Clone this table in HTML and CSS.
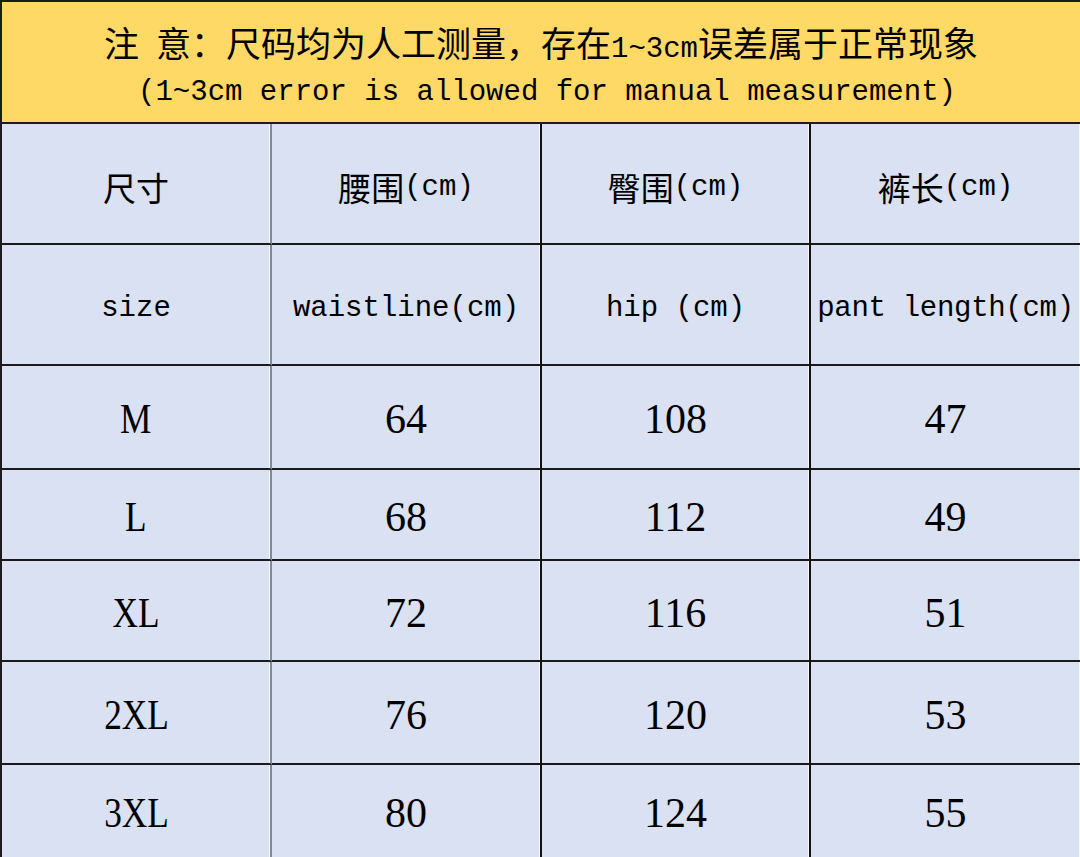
FILE: index.html
```html
<!DOCTYPE html>
<html lang="zh-CN">
<head>
<meta charset="utf-8">
<title>尺码表</title>
<link rel="stylesheet" href="styles.css">
</head>
<body>
<div class="sheet">
  <div class="note">
    <div class="note-line">注<span class="sp"> </span>意：尺码均为人工测量，存在<span class="lat">1~3cm</span>误差属于正常现象</div>
    <div class="note-line note-en"><span class="lat">(1~3cm error is allowed for manual measurement)</span></div>
  </div>

  <div class="cell c1 cjk">尺寸</div>
  <div class="cell c2 cjk">腰围<span class="lat">(cm)</span></div>
  <div class="cell c3 cjk">臀围<span class="lat">(cm)</span></div>
  <div class="cell c4 cjk">裤长<span class="lat">(cm)</span></div>

  <div class="cell c1 en">size</div>
  <div class="cell c2 en">waistline(cm)</div>
  <div class="cell c3 en">hip (cm)</div>
  <div class="cell c4 en">pant length(cm)</div>

  <div class="cell c1 num"><span class="narrow">M</span></div>
  <div class="cell c2 num">64</div>
  <div class="cell c3 num">108</div>
  <div class="cell c4 num">47</div>

  <div class="cell c1 num"><span class="narrow">L</span></div>
  <div class="cell c2 num">68</div>
  <div class="cell c3 num">112</div>
  <div class="cell c4 num">49</div>

  <div class="cell c1 num"><span class="narrow">XL</span></div>
  <div class="cell c2 num">72</div>
  <div class="cell c3 num">116</div>
  <div class="cell c4 num">51</div>

  <div class="cell c1 num"><span class="narrow">2XL</span></div>
  <div class="cell c2 num">76</div>
  <div class="cell c3 num">120</div>
  <div class="cell c4 num">53</div>

  <div class="cell c1 num"><span class="narrow">3XL</span></div>
  <div class="cell c2 num">80</div>
  <div class="cell c3 num">124</div>
  <div class="cell c4 num">55</div>
</div>
</body>
</html>
```

FILE: styles.css
```css
html, body {
  margin: 0;
  padding: 0;
  background: #ffffff;
}

body {
  width: 1080px;
  height: 857px;
  overflow: hidden;
  color: #000;
  font-family: "Noto Sans CJK SC", "Liberation Serif", serif;
}

.sheet {
  box-sizing: border-box;
  width: 1080px;
  height: 857px;
  display: grid;
  grid-template-columns: 270px 270px 269px 271px;
  grid-template-rows: 122px 121px 121px 104px 91px 101px 103px 94px;
  border-top: 2px solid #1c1c1c;
  border-left: 2px solid #1c1c1c;
}

.note {
  grid-column: 1 / 5;
  box-sizing: border-box;
  background: #ffd966;
  border-right: 2px solid #1c1c1c;
  border-bottom: 2px solid #1c1c1c;
  display: flex;
  flex-direction: column;
  align-items: center;
  justify-content: center;
  padding-top: 2px;
}

.note-line {
  font-family: "Noto Sans CJK SC", sans-serif;
  font-size: 35px;
  line-height: 44px;
  height: 44px;
  white-space: nowrap;
}

.note-en {
  padding-left: 12px;
  margin-top: -1px;
}

.sp {
  display: inline-block;
  width: 17px;
}

.lat {
  font-family: "Liberation Mono", "DejaVu Sans Mono", monospace;
  font-size: 29px;
}

.cell {
  box-sizing: border-box;
  background: #d9e1f2;
  border-right: 2px solid #111;
  border-bottom: 2px solid #1a1a1a;
  box-shadow: inset -1px 0 0 rgba(255, 255, 255, 0.75);
  display: flex;
  align-items: center;
  justify-content: center;
  padding-top: 7px;
  white-space: nowrap;
}

.c1 {
  border-right-color: #80889a;
}

.c4 {
  border-right-color: #3a3d44;
}

.cjk {
  font-family: "Noto Sans CJK SC", sans-serif;
  font-size: 33px;
}

.en {
  font-family: "Liberation Mono", "DejaVu Sans Mono", monospace;
  font-size: 29px;
}

.c4.en {
  letter-spacing: -0.3px;
}

.num {
  font-family: "Liberation Serif", "DejaVu Serif", serif;
  font-size: 42px;
  padding-top: 4px;
}

.narrow {
  display: inline-block;
  transform: scaleX(0.84);
}
```
